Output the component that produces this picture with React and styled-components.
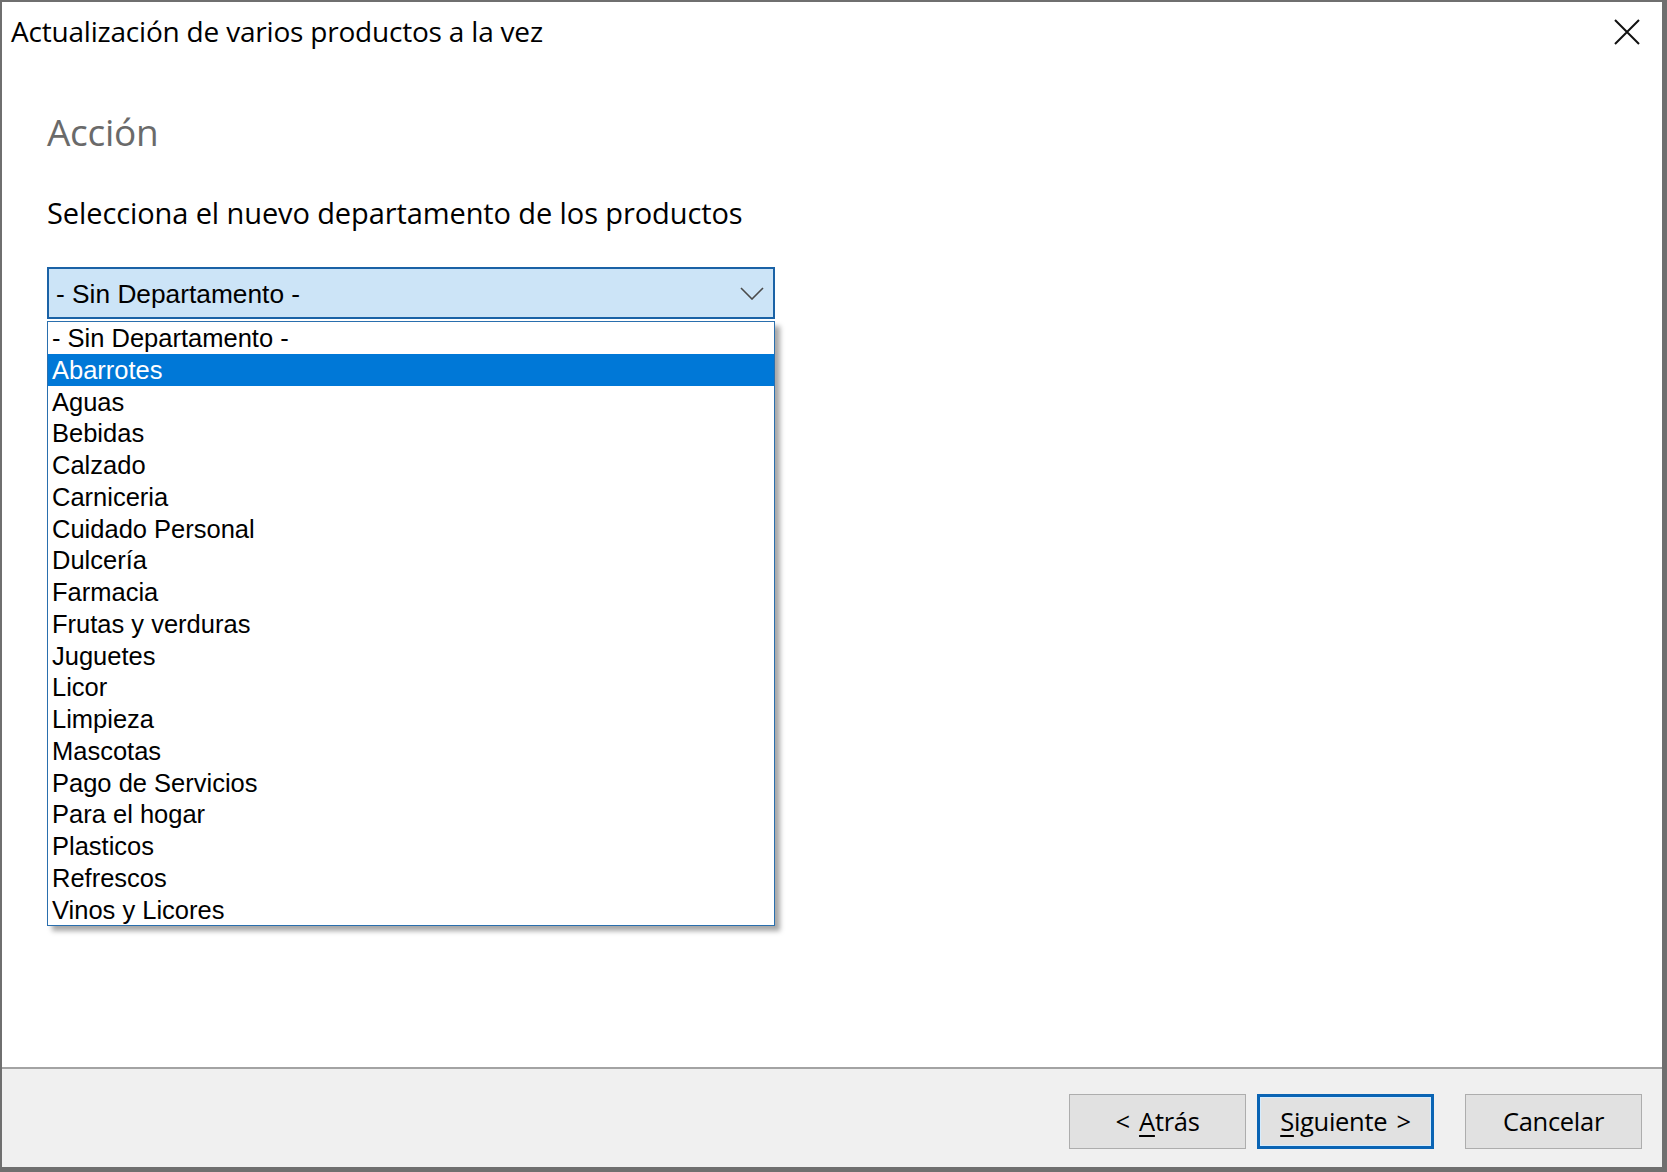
import React from "react";
import styled, { createGlobalStyle, css } from "styled-components";

const departments = [
  "- Sin Departamento -",
  "Abarrotes",
  "Aguas",
  "Bebidas",
  "Calzado",
  "Carniceria",
  "Cuidado Personal",
  "Dulcería",
  "Farmacia",
  "Frutas y verduras",
  "Juguetes",
  "Licor",
  "Limpieza",
  "Mascotas",
  "Pago de Servicios",
  "Para el hogar",
  "Plasticos",
  "Refrescos",
  "Vinos y Licores",
];

const GlobalStyle = createGlobalStyle`
  html, body {
    margin: 0;
    padding: 0;
    background: #6f6f6f;
  }
  * {
    box-sizing: border-box;
  }
`;

const App = () => {
  const selected = "Abarrotes";
  return (
    <>
      <GlobalStyle />
      <Window>
        <TitleBar>
          <Title>Actualización de varios productos a la vez</Title>
          <CloseButton aria-label="Cerrar">
            <svg width="26" height="26" viewBox="0 0 26 26">
              <path
                d="M1 1 L25 25 M25 1 L1 25"
                stroke="#111"
                strokeWidth="2"
                fill="none"
              />
            </svg>
          </CloseButton>
        </TitleBar>
        <Body>
          <Heading>Acción</Heading>
          <Prompt>Selecciona el nuevo departamento de los productos</Prompt>
          <ComboWrap>
            <Combo>
              <ComboText>- Sin Departamento -</ComboText>
              <svg width="24" height="13" viewBox="0 0 24 13">
                <path
                  d="M1 1 L12 12 L23 1"
                  stroke="#4a4a4a"
                  strokeWidth="1.6"
                  fill="none"
                />
              </svg>
            </Combo>
            <DropList>
              {departments.map((name) => (
                <Option key={name} $active={name === selected}>
                  {name}
                </Option>
              ))}
            </DropList>
          </ComboWrap>
        </Body>
        <Footer>
          <Button>
            <span>
              &lt; <u>A</u>trás
            </span>
          </Button>
          <Button $default>
            <span>
              <u>S</u>iguiente &gt;
            </span>
          </Button>
          <Button $gap>
            <span>Cancelar</span>
          </Button>
        </Footer>
      </Window>
    </>
  );
};

const Window = styled.div`
  display: flex;
  flex-direction: column;
  width: 1667px;
  height: 1172px;
  background: #ffffff;
  border-style: solid;
  border-color: #6f6f6f;
  border-width: 2px 5px 5px 2px;
  font-family: "Open Sans", "Noto Sans", sans-serif;
  color: #000;
`;
const TitleBar = styled.div`
  display: flex;
  align-items: center;
  justify-content: space-between;
  height: 60px;
  padding: 0 20px 0 9px;
`;
const Title = styled.div`
  font-size: 28px;
  letter-spacing: -0.2px;
  margin-top: -2px;
`;
const CloseButton = styled.div`
  display: flex;
  align-items: center;
  justify-content: center;
  width: 30px;
  height: 30px;
`;
const Body = styled.div`
  flex: 1;
  display: flex;
  flex-direction: column;
  align-items: flex-start;
  padding: 0 0 0 45px;
`;
const Heading = styled.div`
  font-size: 37px;
  color: #6a6a6a;
  letter-spacing: -0.3px;
  margin-top: 46px;
  line-height: 48px;
`;
const Prompt = styled.div`
  font-size: 29px;
  letter-spacing: -0.1px;
  margin-top: 37px;
  line-height: 40px;
`;
const ComboWrap = styled.div`
  position: relative;
  width: 728px;
  margin-top: 34px;
`;
const Combo = styled.div`
  display: flex;
  align-items: center;
  justify-content: space-between;
  height: 52px;
  padding: 0 9px 0 7px;
  background: #cce4f7;
  border: 2px solid #1a62a6;
`;
const ComboText = styled.span`
  font-family: "Liberation Sans", Arial, sans-serif;
  font-size: 26.3px;
  margin-top: 2px;
`;
const DropList = styled.div`
  position: absolute;
  top: calc(100% + 2px);
  left: 0;
  width: 100%;
  background: #fff;
  border: 1.5px solid #2a6fae;
  box-shadow: 5px 5px 5px rgba(0, 0, 0, 0.35);
`;
const Option = styled.div`
  height: 31.75px;
  line-height: 33px;
  padding-left: 4px;
  font-family: "Liberation Sans", Arial, sans-serif;
  font-size: 25.5px;
  white-space: nowrap;
  color: #000;
  ${({ $active }) =>
    $active &&
    css`
      background: #0078d7;
      color: #fff;
    `}
`;
const Footer = styled.div`
  display: flex;
  align-items: center;
  justify-content: flex-end;
  gap: 11px;
  height: 100px;
  padding: 6px 20px 0 0;
  background: #f0f0f0;
  border-top: 2px solid #a3a3a3;
`;
const Button = styled.div`
  display: flex;
  align-items: center;
  justify-content: center;
  width: 177px;
  height: 55px;
  background: #e1e1e1;
  border: 1.5px solid #adadad;
  font-size: 25.5px;
  letter-spacing: -0.3px;
  color: #000;
  span {
    white-space: pre;
    word-spacing: 3px;
  }
  u {
    text-underline-offset: 4px;
  }
  ${({ $default }) =>
    $default &&
    css`
      border: 3px solid #0a64b4;
      box-shadow: inset 0 0 0 1px #d4ecff;
    `}
  ${({ $gap }) =>
    $gap &&
    css`
      margin-left: 20px;
    `}
`;

export default App;
